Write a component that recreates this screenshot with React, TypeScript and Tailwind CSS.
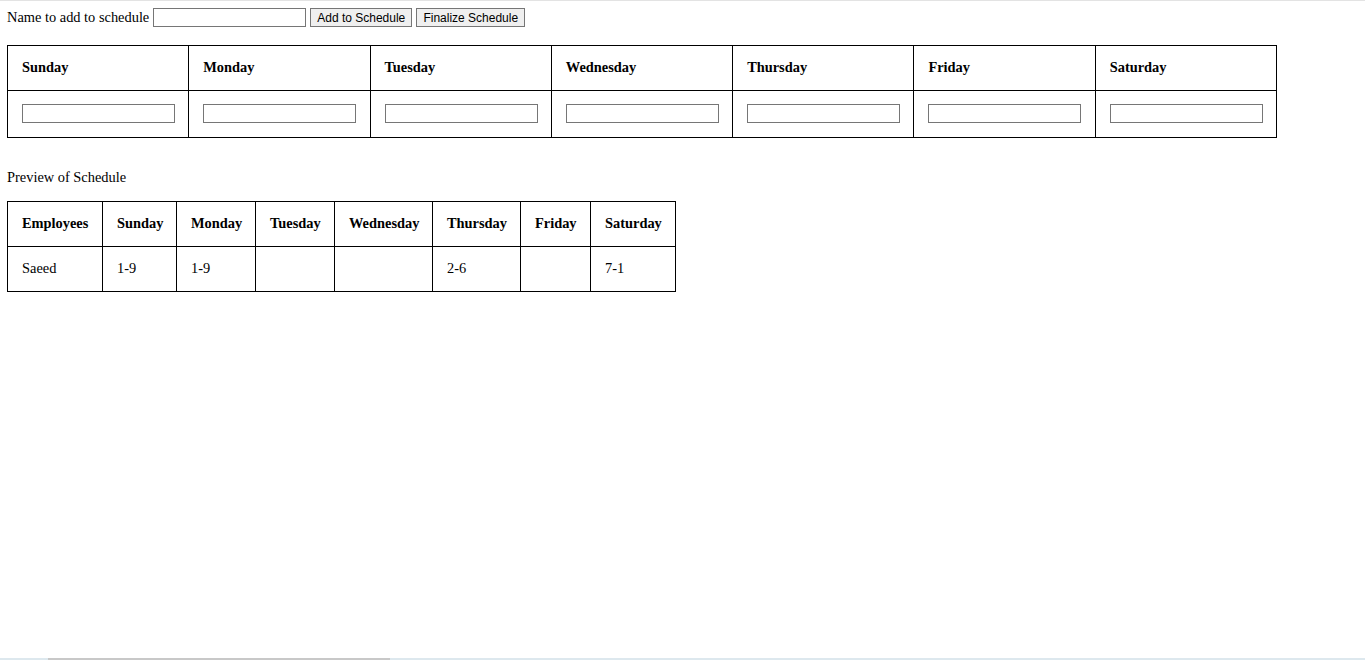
import React from "react";

const days = ["Sunday", "Monday", "Tuesday", "Wednesday", "Thursday", "Friday", "Saturday"];

export default function App() {
  const serif = { fontFamily: '"Liberation Serif", "Times New Roman", serif' };
  const cols: [string, number][] = [
    ["Employees", 95],
    ["Sunday", 74],
    ["Monday", 79],
    ["Tuesday", 79],
    ["Wednesday", 98],
    ["Thursday", 88],
    ["Friday", 70],
    ["Saturday", 85],
  ];
  return (
    <div className="relative h-[660px] w-[1365px] overflow-hidden bg-white text-black" style={serif}>
      <div className="h-px w-full bg-[#e3e3e3]" />
      <div className="px-[7px] pt-[7px] text-[14.4px] leading-[17px]">
        <div className="flex items-center h-[19px]">
          <span>Name to add to schedule</span>
          <input className="ml-[4px] h-[19px] w-[153px] border border-[#767676] bg-white px-[2px] outline-none" />
          <button className="ml-[4px] h-[19px] w-[102px] border border-[#767676] bg-[#efefef] text-[12px] font-['Liberation_Sans',Arial,sans-serif] leading-[18px] text-black">Add to Schedule</button>
          <button className="ml-[4px] h-[19px] w-[109px] border border-[#767676] bg-[#efefef] text-[12px] font-['Liberation_Sans',Arial,sans-serif] leading-[18px] text-black">Finalize Schedule</button>
        </div>

        <table className="mt-[18px] w-[1270px] table-fixed border-collapse border border-black">
          <thead>
            <tr>
              {days.map((d) => (
                <th key={d} className="h-[45px] border border-black pl-[14px] pr-0 pb-[2px] text-left align-middle font-bold">{d}</th>
              ))}
            </tr>
          </thead>
          <tbody>
            <tr>
              {days.map((d) => (
                <td key={d} className="h-[47px] border border-black pl-[14px] pr-0 pb-[2px] align-middle">
                  <input className="block h-[19px] w-[153px] border border-[#767676] bg-white outline-none" />
                </td>
              ))}
            </tr>
          </tbody>
        </table>

        <div className="mt-[31px] h-[17px]">Preview of Schedule</div>

        <table className="mt-[15px] w-[669px] table-fixed border-collapse border border-black">
          <thead>
            <tr>
              {cols.map(([h, w]) => (
                <th key={h} style={{ width: w }} className="h-[45px] border border-black pl-[14px] pr-0 pb-[2px] text-left align-middle font-bold whitespace-nowrap overflow-visible">{h}</th>
              ))}
            </tr>
          </thead>
          <tbody>
            <tr>
              {["Saeed", "1-9", "1-9", "", "", "2-6", "", "7-1"].map((v, i) => (
                <td key={i} className="h-[45px] border border-black pl-[14px] pr-0 pb-[2px] align-middle">{v}</td>
              ))}
            </tr>
          </tbody>
        </table>
      </div>

      <div className="absolute bottom-0 left-0 flex h-[2px] w-full">
        <div className="w-[48px] bg-[#dde8ee]" />
        <div className="w-[342px] bg-[#c8c8c8]" />
        <div className="flex-1 bg-[#dde8ee]" />
      </div>
    </div>
  );
}
